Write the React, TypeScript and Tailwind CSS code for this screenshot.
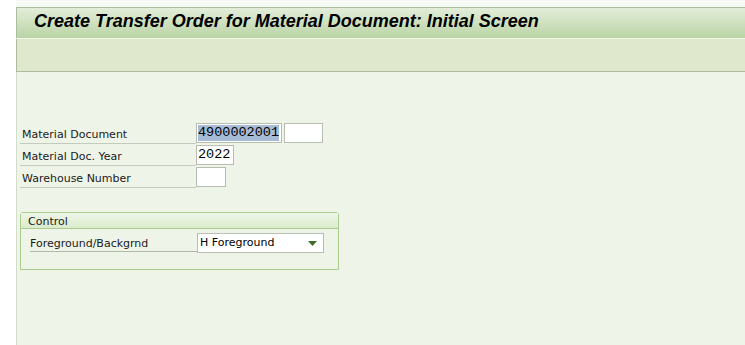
import React from "react";

const labelFont = { fontFamily: "Tahoma, 'DejaVu Sans', sans-serif" };

function FieldRow({ label, children }: { label: string; children: React.ReactNode }) {
  return (
    <div className="flex items-start h-[22px]">
      <div className="w-[176px] h-[21px] border-b border-[#c3cbbd] pl-[2px] pt-[5px] text-[11px] leading-[14px] text-[#1a1a1a]">
        {label}
      </div>
      <div className="flex gap-[2px]">{children}</div>
    </div>
  );
}

function Input({ width, value, selected }: { width: string; value?: string; selected?: boolean }) {
  return (
    <div
      className={`${width} h-[20px] bg-white border border-[#b7bdb1] flex items-center px-[1px] font-['Liberation_Mono',monospace] text-[13.5px] text-black`}
    >
      {value && <span className={selected ? "bg-[#a6bcd6] leading-[16px]" : "leading-[16px]"}>{value}</span>}
    </div>
  );
}

export default function App() {
  return (
    <div className="w-[745px] h-[345px] bg-white flex overflow-hidden" style={labelFont}>
      <div className="w-[16px] shrink-0" />
      <div className="flex-1 flex flex-col pt-[7px] bg-[#f7f9f4]">
        <div className="h-[31px] border-t border-l border-[#adbc9f] bg-gradient-to-b from-[#e3edd9] to-[#bad4a5] flex items-center pl-[17px] pb-[3px]">
          <h1 className="font-['Liberation_Sans',sans-serif] font-bold italic text-[18px] tracking-[0px] text-black">
            Create Transfer Order for Material Document: Initial Screen
          </h1>
        </div>
        <div className="h-[1px] bg-[#eef4e6]" />
        <div className="h-[33px] bg-[#dfe7cd] border-b border-l border-[#adbc9f]" />
        <div className="flex-1 bg-[#eff4e9] border-l border-[#d3ddc9] pl-[3px] pt-[51px]">
          <div className="flex flex-col">
            <FieldRow label="Material Document">
              <Input width="w-[86px]" value="4900002001" selected />
              <Input width="w-[39px]" />
            </FieldRow>
            <FieldRow label="Material Doc. Year">
              <Input width="w-[38px]" value="2022" />
            </FieldRow>
            <FieldRow label="Warehouse Number">
              <Input width="w-[30px]" />
            </FieldRow>
          </div>

          <div className="mt-[23px] w-[319px] h-[58px] border border-[#a9cd8e] rounded-tr-[3px] rounded-tl-[3px] flex flex-col">
            <div className="h-[16px] bg-gradient-to-b from-[#eef5e6] to-[#dcebcd] border-b border-[#a9cd8e] pl-[7px] pt-[1px] text-[11px] leading-[15px] text-[#1a1a1a]">
              Control
            </div>
            <div className="flex items-start pl-[9px] pt-[4px]">
              <div className="w-[167px] h-[19px] border-b border-[#b0b8aa] pt-[4px] text-[11px] leading-[14px] text-[#1a1a1a]">
                Foreground/Backgrnd
              </div>
              <div className="w-[127px] h-[20px] bg-white border border-[#b7bdb1] flex items-center justify-between pl-[2px] pr-[6px] text-[11px] text-black">
                <span>H Foreground</span>
                <svg width="9" height="5" viewBox="0 0 9 5">
                  <path d="M0 0 H9 L4.5 5 Z" fill="#3d6b2a" />
                </svg>
              </div>
            </div>
          </div>
        </div>
      </div>
    </div>
  );
}
